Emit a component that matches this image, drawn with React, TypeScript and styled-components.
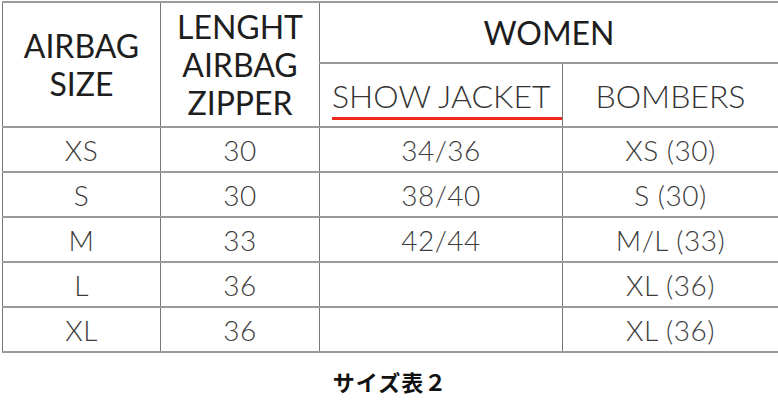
import React from "react";
import styled, { createGlobalStyle } from "styled-components";

const Global = createGlobalStyle`
  html, body { margin: 0; padding: 0; background: #fff; }
  body { font-family: Lato, "Noto Sans", sans-serif; }
`;

const Page = styled.div`
  width: 778px;
  height: 420px;
  display: flex;
  flex-direction: column;
  padding: 1px 0 0 2px;
  box-sizing: border-box;
`;

const Table = styled.table`
  border-collapse: collapse;
  table-layout: fixed;
  width: 776px;
  border-left: 1px solid #333;
  border-right: 1px solid #333;
`;

const Col = styled.col<{ $w: number }>`
  width: ${(p) => p.$w}px;
`;

const HeadCell = styled.th<{ $h: number; $sub?: boolean }>`
  height: ${(p) => p.$h}px;
  padding: ${(p) => (p.$sub ? "0 0 6px 0" : "0")};
  border-top: 2px solid #9a9a9a;
  border-bottom: 2px solid #9a9a9a;
  border-left: 1px solid #777;
  border-right: 1px solid #777;
  font-family: Lato, sans-serif;
  font-weight: ${(p) => (p.$sub ? 300 : 400)};
  font-size: 32px;
  line-height: 38px;
  color: ${(p) => (p.$sub ? "#333" : "#1e1e1e")};
  text-align: center;
  vertical-align: ${(p) => (p.$sub ? "bottom" : "middle")};
  box-sizing: border-box;
`;

const SubLabel = styled.div<{ $marked?: boolean }>`
  line-height: 32px;
  padding-bottom: 5px;
  margin-left: ${(p) => (p.$marked ? "12px" : "0")};
  text-align: ${(p) => (p.$marked ? "left" : "center")};
  border-bottom: 3px solid ${(p) => (p.$marked ? "#f3291c" : "transparent")};
  white-space: nowrap;
`;

const Cell = styled.td`
  height: 45px;
  padding: 0;
  border-top: 2px solid #9a9a9a;
  border-bottom: 2px solid #9a9a9a;
  border-left: 1px solid #777;
  border-right: 1px solid #777;
  font-family: Lato, sans-serif;
  font-weight: 300;
  font-size: 28px;
  letter-spacing: 0.5px;
  color: #3c3c3c;
  text-align: center;
  vertical-align: middle;
  box-sizing: border-box;
`;

const Caption = styled.div`
  margin-top: 15px;
  width: 776px;
  text-align: center;
  font-family: "Noto Sans CJK JP", sans-serif;
  font-weight: 700;
  font-size: 22px;
  line-height: 26px;
  color: #111;
  letter-spacing: 1px;
`;

const rows: [string, string, string, string][] = [
  ["XS", "30", "34/36", "XS (30)"],
  ["S", "30", "38/40", "S (30)"],
  ["M", "33", "42/44", "M/L (33)"],
  ["L", "36", "", "XL (36)"],
  ["XL", "36", "", "XL (36)"],
];

export default function App() {
  return (
    <Page>
      <Global />
      <Table>
        <colgroup>
          <Col $w={158} />
          <Col $w={159} />
          <Col $w={243} />
          <Col $w={216} />
        </colgroup>
        <thead>
          <tr>
            <HeadCell $h={61} rowSpan={2}>
              AIRBAG
              <br />
              SIZE
            </HeadCell>
            <HeadCell $h={61} rowSpan={2}>
              LENGHT
              <br />
              AIRBAG
              <br />
              ZIPPER
            </HeadCell>
            <HeadCell $h={61} colSpan={2}>
              WOMEN
            </HeadCell>
          </tr>
          <tr>
            <HeadCell $h={64} $sub>
              <SubLabel $marked>SHOW JACKET</SubLabel>
            </HeadCell>
            <HeadCell $h={64} $sub>
              <SubLabel>BOMBERS</SubLabel>
            </HeadCell>
          </tr>
        </thead>
        <tbody>
          {rows.map((r, i) => (
            <tr key={i}>
              {r.map((c, j) => (
                <Cell key={j}>{c}</Cell>
              ))}
            </tr>
          ))}
        </tbody>
      </Table>
      <Caption>サイズ表２</Caption>
    </Page>
  );
}
